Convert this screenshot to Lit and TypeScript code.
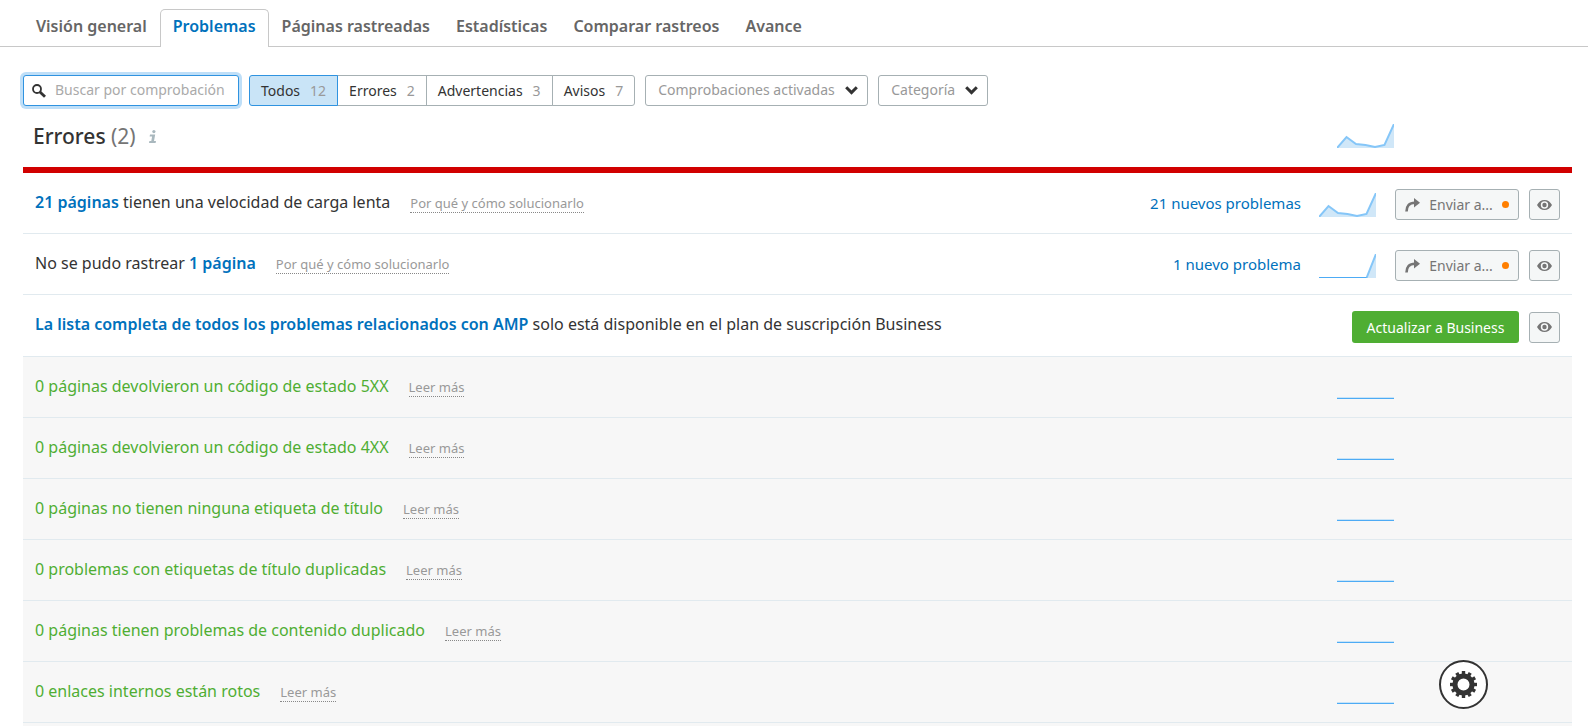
import { LitElement, html, css, svg, nothing } from "lit";
import { customElement, property, state } from "lit/decorators.js";
import { classMap } from "lit/directives/class-map.js";

const TREND = [0, 11, 4, 3, 1, 3, 24];
const SINGLE = [0, 0, 0, 0, 0, 0, 24];
const FLAT = [0, 0, 0, 0, 0, 0, 0];

interface Issue {
  before?: string;
  link?: string;
  after?: string;
  help?: string;
  fresh?: string;
  trend?: number[];
  upgrade?: boolean;
  ok?: boolean;
}

const WHY = "Por qué y cómo solucionarlo";
const MORE = "Leer más";

const ISSUES: Issue[] = [
  { link: "21 páginas", after: " tienen una velocidad de carga lenta", help: WHY, fresh: "21 nuevos problemas", trend: TREND },
  { before: "No se pudo rastrear ", link: "1 página", help: WHY, fresh: "1 nuevo problema", trend: SINGLE },
  {
    link: "La lista completa de todos los problemas relacionados con AMP",
    after: " solo está disponible en el plan de suscripción Business",
    upgrade: true,
  },
  { before: "0 páginas devolvieron un código de estado 5XX", help: MORE, ok: true },
  { before: "0 páginas devolvieron un código de estado 4XX", help: MORE, ok: true },
  { before: "0 páginas no tienen ninguna etiqueta de título", help: MORE, ok: true },
  { before: "0 problemas con etiquetas de título duplicadas", help: MORE, ok: true },
  { before: "0 páginas tienen problemas de contenido duplicado", help: MORE, ok: true },
  { before: "0 enlaces internos están rotos", help: MORE, ok: true },
];

const TABS = ["Visión general", "Problemas", "Páginas rastreadas", "Estadísticas", "Comparar rastreos", "Avance"];

const FILTERS = [
  { name: "Todos", count: 12 },
  { name: "Errores", count: 2 },
  { name: "Advertencias", count: 3 },
  { name: "Avisos", count: 7 },
];

const base = css`
  * {
    box-sizing: border-box;
  }
  a {
    color: #0071bc;
    text-decoration: none;
  }
  button {
    font: inherit;
    cursor: pointer;
  }
  svg {
    display: block;
  }
`;

@customElement("spark-line")
export class SparkLine extends LitElement {
  @property({ attribute: false }) values: number[] = FLAT;

  static styles = css`
    :host {
      display: block;
      flex: none;
    }
    svg {
      display: block;
    }
    .area {
      fill: #d0e7f8;
    }
    .line {
      fill: none;
      stroke: #85c6f8;
      stroke-width: 2;
    }
    .line.flat {
      stroke: #c9e4f7;
      stroke-width: 4;
    }
    .base {
      stroke: #4dabf5;
      stroke-width: 1;
    }
  `;

  render() {
    const w = 57;
    const h = 24;
    const step = w / (this.values.length - 1);
    const pts = this.values.map((v, i) => `${(i * step).toFixed(1)},${h - v}`);
    const last = this.values.lastIndexOf(0);
    const allFlat = last === this.values.length - 1;
    return html`<svg width=${w} height=${h} viewBox="0 0 57 24" aria-hidden="true">
      ${svg`<polygon class="area" points="0,24 ${pts.join(" ")} 57,24"></polygon>
      <polyline class=${allFlat ? "line flat" : "line"} points=${pts.join(" ")}></polyline>
      ${last > 1 ? svg`<line class="base" x1="0" y1="23.5" x2=${last * step} y2="23.5"></line>` : nothing}`}
    </svg>`;
  }
}

@customElement("issue-row")
export class IssueRow extends LitElement {
  @property({ attribute: false }) issue!: Issue;

  static styles = [
    base,
    css`
      :host {
        display: block;
      }
      .row {
        display: flex;
        justify-content: space-between;
        min-height: 61px;
        padding: 16px 12px 13px;
        border-bottom: 1px solid #e1eaef;
        background: #fff;
      }
      .row.ok {
        padding: 14px 12px 15px;
        background: #f7f7f7;
        color: #4fae33;
      }
      .text {
        display: flex;
        align-items: baseline;
        gap: 20px;
        line-height: 26px;
      }
      .ok .text {
        line-height: 30px;
      }
      .title {
        font-weight: 600;
      }
      .help {
        font-size: 13px;
        line-height: 18px;
        color: #999;
        border-bottom: 1px dotted #888;
      }
      .side {
        display: flex;
        align-items: center;
        gap: 10px;
      }
      .ok .side {
        padding-right: 166px;
      }
      .fresh {
        margin-right: 8px;
        padding-bottom: 4px;
        font-size: 15px;
      }
      spark-line {
        margin-right: 9px;
      }
      .ok spark-line {
        margin-right: 0;
      }
      .btn {
        display: flex;
        align-items: center;
        justify-content: center;
        height: 31px;
        padding: 0;
        border: 1px solid #a6b0b3;
        border-radius: 3px;
        background: #f5f7f7;
        color: #757575;
        font-size: 14px;
      }
      .send {
        width: 124px;
        gap: 9px;
      }
      .dot {
        width: 7px;
        height: 7px;
        border-radius: 50%;
        background: #ff7f00;
      }
      .eye {
        width: 31px;
      }
      .upgrade {
        height: 32px;
        width: 167px;
        border: 0;
        background: #4fae33;
        color: #fff;
      }
    `,
  ];

  private eye() {
    return html`<button class="btn eye" aria-label="Ocultar">
      <svg width="15" height="10" viewBox="0 0 15 10">
        <path
          fill="#757575"
          fill-rule="evenodd"
          d="M0 5C1.6 1.9 4.3 0 7.5 0S13.4 1.9 15 5c-1.6 3.1-4.3 5-7.500 5S1.600 8.100 0 5ZM7.500 1.300a3.700 3.700 0 1 0 0 7.400a3.700 3.700 0 1 0 0-7.400ZM7.500 2.800a2.200 2.200 0 1 1 0 4.400a2.200 2.200 0 1 1 0-4.400Z"
        ></path>
      </svg>
    </button>`;
  }

  render() {
    const i = this.issue;
    return html`<div class=${classMap({ row: true, ok: !!i.ok })}>
      <div class="text">
        <span>${i.before}${i.link ? html`<a class="title" href="#">${i.link}</a>` : nothing}${i.after}</span>
        ${i.help ? html`<a class="help" href="#">${i.help}</a>` : nothing}
      </div>
      <div class="side">
        ${i.fresh ? html`<a class="fresh" href="#">${i.fresh}</a>` : nothing}
        ${i.upgrade ? nothing : html`<spark-line .values=${i.trend ?? FLAT}></spark-line>`}
        ${i.upgrade ? html`<button class="btn upgrade">Actualizar a Business</button>` : nothing}
        ${i.fresh
          ? html`<button class="btn send">
              <svg width="15" height="14" viewBox="0 0 15 14">
                <path fill="none" stroke="#757575" stroke-width="2.600" d="M1.500 13.500C1.500 8 4 4.700 10 4.700"></path>
                <path fill="#757575" d="M9 0l6 4.700-6 4.800z"></path>
              </svg>
              <span>Enviar a...</span>
              <span class="dot"></span>
            </button>`
          : nothing}
        ${i.ok ? nothing : this.eye()}
      </div>
    </div>`;
  }
}

@customElement("app-root")
export class AppRoot extends LitElement {
  @state() private tab = "Problemas";
  @state() private filter = "Todos";

  static styles = [
    base,
    css`
      :host {
        display: flex;
        flex-direction: column;
        min-height: 100vh;
        background: #fff;
        color: #333;
        font-family: "Noto Sans", sans-serif;
        font-size: 16px;
      }
      .tabs {
        display: flex;
        height: 47px;
        padding: 9px 23px 0;
        border-bottom: 1px solid #c8c8c8;
      }
      .tab {
        height: 38px;
        padding: 0 12px;
        border: 1px solid transparent;
        border-bottom: 0;
        border-radius: 5px 5px 0 0;
        color: #666;
        font-weight: 600;
        line-height: 32px;
      }
      .tab.on {
        border-color: #c8c8c8;
        background: #fff;
        color: #0071bc;
      }
      .filters {
        display: flex;
        gap: 10px;
        padding: 28px 23px 0;
        font-size: 14px;
      }
      .field {
        position: relative;
        display: flex;
        align-items: center;
      }
      .field svg {
        position: absolute;
        pointer-events: none;
      }
      .lens {
        left: 9px;
      }
      .chev {
        right: 10px;
      }
      .search {
        width: 216px;
        height: 31px;
        padding: 0 4px 2px 31px;
        border: 1px solid #2f93e0;
        border-radius: 3px;
        outline: 0;
        box-shadow: 0 0 0 3px #bfdff8;
        font: inherit;
      }
      .search::placeholder {
        color: #aaa;
      }
      .group {
        display: flex;
      }
      .seg {
        display: flex;
        align-items: center;
        gap: 10px;
        height: 31px;
        margin-left: -1px;
        padding: 0 11px 1px;
        border: 1px solid #a6b0b3;
        background: #fff;
        color: #333;
      }
      .seg:first-child {
        margin-left: 0;
        border-radius: 3px 0 0 3px;
      }
      .seg:last-child {
        border-radius: 0 3px 3px 0;
      }
      .seg.on {
        z-index: 1;
        border-color: #2f93e0;
        background: #c9e4f7;
      }
      .count {
        color: #999;
      }
      .pick {
        appearance: none;
        height: 31px;
        padding: 0 32px 2px 12px;
        border: 1px solid #a6b0b3;
        border-radius: 3px;
        background: #fff;
        color: #999;
        font: inherit;
      }
      .head {
        display: flex;
        align-items: center;
        justify-content: space-between;
        height: 61px;
        margin: 0 16px 0 23px;
        padding: 0 178px 2px 10px;
      }
      .name {
        display: flex;
        align-items: center;
        gap: 13px;
      }
      h2 {
        margin: 0;
        font-size: 21px;
        font-weight: 500;
        line-height: 30px;
      }
      .name svg {
        margin-top: 2px;
      }
      .total {
        color: #757575;
        font-weight: 400;
      }
      .list {
        flex: 1;
        margin: 0 16px 0 23px;
        padding: 0;
        border-top: 6px solid #d10000;
        background: #f7f7f7;
        list-style: none;
      }
      .gear {
        position: fixed;
        right: 100px;
        bottom: 17px;
        display: flex;
        align-items: center;
        justify-content: center;
        width: 49px;
        height: 49px;
        padding: 0;
        border: 2px solid #333;
        border-radius: 50%;
        background: #fff;
      }
    `,
  ];

  private select(label: string) {
    return html`<div class="field">
      <select class="pick" aria-label=${label}>
        <option>${label}</option>
      </select>
      <svg class="chev" width="13" height="9" viewBox="0 0 13 9">
        <path fill="none" stroke="#333" stroke-width="3" d="M1.200 1.300l5.300 5.300 5.300-5.300"></path>
      </svg>
    </div>`;
  }

  render() {
    const teeth = Array.from({ length: 12 }, (_, i) => i * 30);
    return html`
      <nav class="tabs">
        ${TABS.map(
          (t) => html`<a
            href="#"
            class=${classMap({ tab: true, on: t === this.tab })}
            @click=${() => (this.tab = t)}
            >${t}</a
          >`
        )}
      </nav>
      <div class="filters">
        <div class="field">
          <svg class="lens" width="14" height="14" viewBox="0 0 14 14">
            <circle cx="5" cy="5" r="4" fill="none" stroke="#333" stroke-width="1.800"></circle>
            <path stroke="#333" stroke-width="2.800" d="M8 8l5 4.800"></path>
          </svg>
          <input class="search" type="text" aria-label="Buscar por comprobación" placeholder="Buscar por comprobación" />
        </div>
        <div class="group" role="group" aria-label="Tipo">
          ${FILTERS.map(
            (f) => html`<button
              class=${classMap({ seg: true, on: f.name === this.filter })}
              aria-pressed=${f.name === this.filter}
              @click=${() => (this.filter = f.name)}
            >
              <span>${f.name}</span><span class="count">${f.count}</span>
            </button>`
          )}
        </div>
        ${this.select("Comprobaciones activadas")} ${this.select("Categoría")}
      </div>
      <header class="head">
        <div class="name">
          <h2>Errores <span class="total">(2)</span></h2>
          <svg width="8" height="13" viewBox="0 0 8 13" aria-hidden="true">
            <circle cx="4.900" cy="1.600" r="1.600" fill="#a9b8be"></circle>
            <path fill="#a9b8be" d="M1 4.500h5.200L5 11h2l-.4 2H0l.4-2h1.900l.8-4.500H.6z"></path>
          </svg>
        </div>
        <spark-line .values=${TREND}></spark-line>
      </header>
      <ul class="list">
        ${ISSUES.map((i) => html`<li><issue-row .issue=${i}></issue-row></li>`)}
      </ul>
      <button class="gear" aria-label="Configuración">
        <svg width="27" height="27" viewBox="-13.500 -13.500 27 27">
          <circle r="8.500" fill="none" stroke="#333" stroke-width="5"></circle>
          ${teeth.map(
            (a) => svg`<rect x="-1.700" y="-13.500" width="3.400" height="4" fill="#333" transform="rotate(${a})"></rect>`
          )}
        </svg>
      </button>
    `;
  }
}
